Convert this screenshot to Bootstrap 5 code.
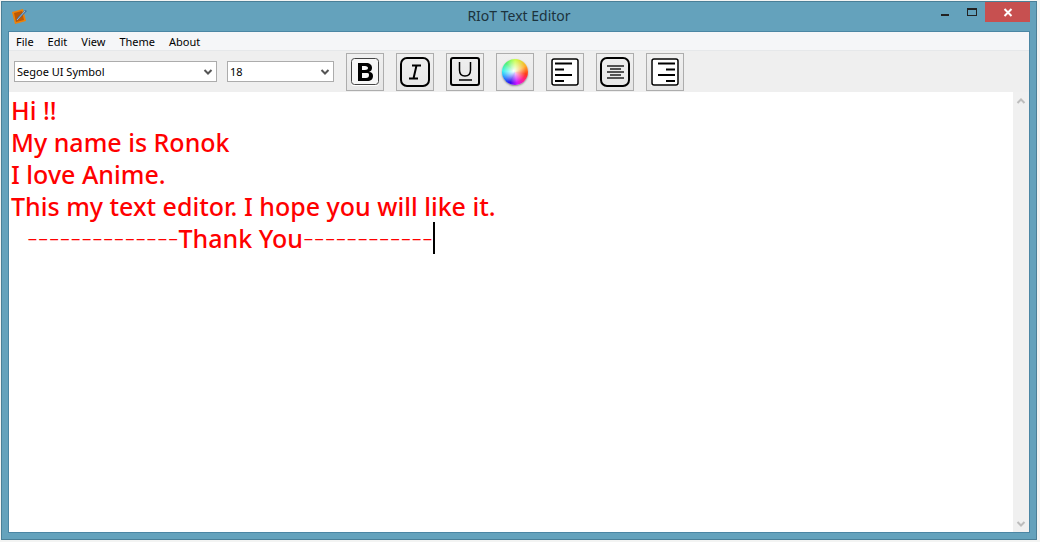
<!DOCTYPE html>
<html lang="en">
<head>
<meta charset="utf-8">
<meta name="viewport" content="width=device-width, initial-scale=1">
<title>RIoT Text Editor</title>
<link href="https://cdn.jsdelivr.net/npm/bootstrap@5.3.0/dist/css/bootstrap.min.css" rel="stylesheet">
<style>
body { background: #f3f4f3; padding: 1px 3px 2px 1px; font-family: "Noto Sans", sans-serif; font-size: 11px; color: #000; }
.app-window { background: #64a2bc; border: 1px solid #4a7f97; padding: 0 6px 6px; }
.title-bar { height: 29px; }
.app-title { font-size: 14px; line-height: 28px; color: #1c333d; }
.app-icon { left: 4px; top: 6px; }
.window-controls { right: 0; top: 0; }
.window-controls button { width: 27px; height: 20px; background: none; }
.window-controls .close-btn { width: 45px; background: #c75050; }
.client { border: 1px solid #4b86a4; background: #efefef; }
.menu-strip { background: #f5f6f8; border-bottom: 1px solid #e6e8ea; height: 19px; }
.menu-strip a { color: #000; line-height: 20px; padding: 0 7px; }
.tools { height: 41px; padding-left: 5px; gap: 12px; }
.tools .form-select { height: 21px; padding: 0 18px 0 2px; font-size: 11px; line-height: 18px; color: #000; border: 1px solid #acacac; border-radius: 0; background-color: #fff; background-position: right 3px center; background-size: 10px 10px; background-image: url("data:image/svg+xml,%3Csvg xmlns='http://www.w3.org/2000/svg' viewBox='0 0 10 10'%3E%3Cpath d='M1.5 3L5 6.5 8.5 3' fill='none' stroke='%23555' stroke-width='2'/%3E%3C/svg%3E"); }
.tools .font-family { width: 203px; }
.tools .font-size { width: 107px; }
.font-choices { gap: 10px; }
.tool-btn { width: 38px; height: 38px; border: 1px solid #adadad; background: linear-gradient(#f0f0f0, #e6e6e6); }
.tool-btn svg { width: 32px; height: 32px; }
.color-wheel { width: 26px; height: 26px; border-radius: 50%; background: radial-gradient(circle at 45% 45%, #fff 0, #fffc 10%, #fff0 60%), conic-gradient(from 0deg, #c6ff3c, #ffb02a 60deg, #ff3b18 100deg, #ff2090 135deg, #d018ff 170deg, #3010f0 205deg, #2090ff 245deg, #20f0f0 275deg, #30f060 315deg, #c6ff3c); box-shadow: 0 1px 2px #0006; }
.page-text { font-size: 25px; line-height: 32px; font-weight: 500; color: #f00; padding: 2px; outline: 0; }
.page-text p { min-height: 32px; }
.signature { padding-left: 16px; }
.rule-dashes { font-family: "DejaVu Sans", sans-serif; font-weight: 200; font-size: 30px; }
.caret { width: 2px; height: 32px; background: #000; }
.scroll-track { width: 16px; background: #f0f0f0; }
.scroll-track button { width: 16px; height: 17px; background: none; }
</style>
</head>
<body class="vh-100 overflow-hidden">
<main class="app-window h-100 d-flex flex-column">
  <header class="title-bar position-relative flex-shrink-0 text-center">
    <svg class="app-icon position-absolute" width="16" height="17" viewBox="0 0 16 17" aria-hidden="true"><path d="M0 4L11 1 14 13 3 16Z" fill="#ef8208"/><path d="M2 5L10 3 12 12 4 14Z" fill="#bd5904"/><path d="M4 13L6 9 13 2 15 3 8 10Z" fill="#3f6c9c"/><path d="M5 12L13 3" stroke="#9dbad1"/></svg>
    <h1 class="app-title fw-normal m-0">RIoT Text Editor</h1>
    <div class="window-controls position-absolute d-flex">
      <button class="border-0 p-0 d-flex" aria-label="Minimize"><svg width="27" height="20"><path d="M10 12h8v2h-8z" fill="#222"/></svg></button>
      <button class="border-0 p-0 d-flex" aria-label="Maximize"><svg width="27" height="20"><path d="M9 6h10v8H9zM10 8v5h8V8z" fill="#222" fill-rule="evenodd"/></svg></button>
      <button class="close-btn border-0 p-0 d-flex justify-content-center" aria-label="Close"><svg width="45" height="20"><path d="M19.500 7l7 7M26.500 7l-7 7" stroke="#fff" stroke-width="2"/></svg></button>
    </div>
  </header>
  <div class="client d-flex flex-column flex-grow-1 overflow-hidden">
    <nav class="menu-strip d-flex flex-shrink-0" aria-label="Main menu">
      <a class="text-decoration-none" href="#">File</a>
      <a class="text-decoration-none" href="#">Edit</a>
      <a class="text-decoration-none" href="#">View</a>
      <a class="text-decoration-none" href="#">Theme</a>
      <a class="text-decoration-none" href="#">About</a>
    </nav>
    <div class="tools d-flex align-items-center flex-shrink-0" role="toolbar" aria-label="Formatting">
      <div class="font-choices d-flex">
        <select class="form-select font-family" aria-label="Font"><option>Segoe UI Symbol</option></select>
        <select class="form-select font-size" aria-label="Font size"><option>18</option></select>
      </div>
      <button class="tool-btn p-0 d-flex align-items-center justify-content-center" aria-label="Bold"><svg viewBox="0 0 32 32"><rect x="2" y="2" width="28" height="28" rx="3" fill="#fff"/><rect x="2.500" y="2.500" width="27" height="26" rx="3" fill="#f7f7f7" stroke="#444"/><path fill-rule="evenodd" d="M9 7H17C21 7 23 9 23 12C23 14 22 15 20 16C23 16 24 18 24 20C24 23 22 25 18 25H9ZM13 10V14H16C18 14 19 13 19 12S18 10 16 10ZM13 17V22H17C19 22 20 21 20 19S19 17 17 17Z"/></svg></button>
      <button class="tool-btn p-0 d-flex align-items-center justify-content-center" aria-label="Italic"><svg viewBox="0 0 32 32" fill="none" stroke="#000" stroke-width="2"><rect x="2" y="2" width="28" height="28" rx="6"/><path d="M13 9.500h9M10 22.500h9M17.500 9.500l-3 13" stroke-width="2"/></svg></button>
      <button class="tool-btn p-0 d-flex align-items-center justify-content-center" aria-label="Underline"><svg viewBox="0 0 32 32" fill="none" stroke="#000" stroke-width="2"><rect x="2" y="2" width="28" height="27" rx="2"/><path d="M10.500 6v8q0 6 5.500 6t5.500-6V6M10 24h13" stroke-width="1.500"/></svg></button>
      <button class="tool-btn p-0 d-flex align-items-center justify-content-center" aria-label="Text color"><span class="color-wheel"></span></button>
      <button class="tool-btn p-0 d-flex align-items-center justify-content-center" aria-label="Align left"><svg viewBox="0 0 32 32" fill="none" stroke="#000" stroke-width="2"><path d="M2 2h28v28H2z" fill="#fff" stroke="none"/><rect x="3" y="3" width="26" height="26" rx="2" stroke-width="1.500"/><path d="M6 7.500h17M6 13.500h9M6 19h17M6 25h9"/></svg></button>
      <button class="tool-btn p-0 d-flex align-items-center justify-content-center" aria-label="Align center"><svg viewBox="0 0 32 32" fill="none" stroke="#000" stroke-width="2"><rect x="2" y="2" width="28" height="28" rx="6"/><path d="M8 10h17M11 13h11M8 16h17M11 19h11M8 22h17" stroke="#222" stroke-width="1.500"/></svg></button>
      <button class="tool-btn p-0 d-flex align-items-center justify-content-center" aria-label="Align right"><svg viewBox="0 0 32 32" fill="none" stroke="#000" stroke-width="2"><path d="M2 2h28v28H2z" fill="#fff" stroke="none"/><rect x="3" y="3" width="26" height="26" rx="2" stroke-width="1.500"/><path d="M9 7.500h17M17 13.500h9M9 19h17M17 25h9"/></svg></button>
    </div>
    <div class="d-flex flex-grow-1 overflow-hidden bg-white">
      <div class="page-text flex-grow-1 overflow-hidden" contenteditable="true" role="textbox" aria-multiline="true" aria-label="Document" spellcheck="false">
        <p class="m-0">Hi !!</p>
        <p class="m-0">My name is Ronok</p>
        <p class="m-0">I love Anime.</p>
        <p class="m-0">This my text editor. I hope you will like it.</p>
        <p class="m-0 signature d-flex"><span class="rule-dashes">--------------</span><span>Thank You</span><span class="rule-dashes">------------</span><span class="caret"></span></p>
      </div>
      <div class="scroll-track d-flex flex-column justify-content-between flex-shrink-0">
        <button class="border-0 p-0 d-flex" aria-label="Scroll up"><svg width="16" height="17"><path d="M4.500 11L8 7.500l3.500 3.500" fill="none" stroke="#bdbdbd" stroke-width="2"/></svg></button>
        <button class="border-0 p-0 d-flex" aria-label="Scroll down"><svg width="16" height="17"><path d="M4.500 7L8 10.500 11.500 7" fill="none" stroke="#bdbdbd" stroke-width="2"/></svg></button>
      </div>
    </div>
  </div>
</main>
<script src="https://cdn.jsdelivr.net/npm/bootstrap@5.3.0/dist/js/bootstrap.bundle.min.js"></script>
</body>
</html>
